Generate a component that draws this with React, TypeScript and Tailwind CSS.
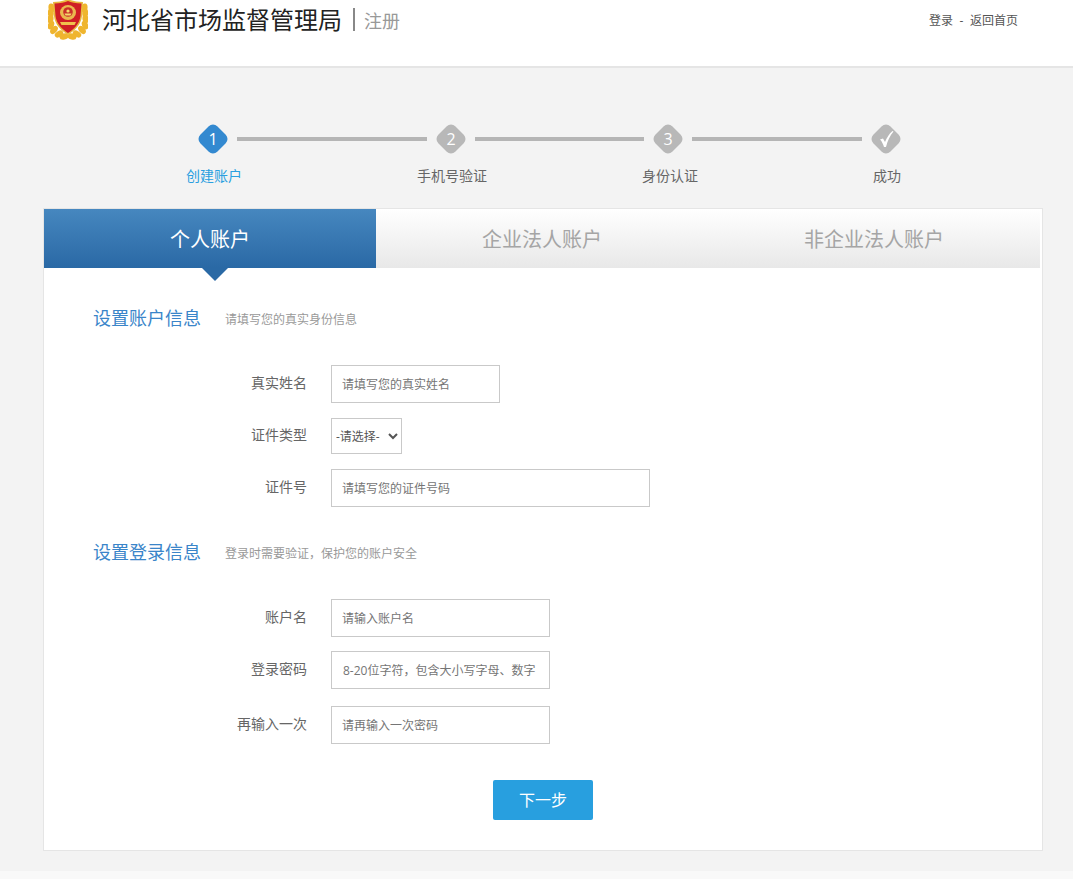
import React from 'react';

const fontCls = "font-['Open_Sans','Noto_Sans_CJK_SC',sans-serif]";

const leaves = [
  [3.5, 8, -8],
  [2.8, 13, -2],
  [2.5, 19, 6],
  [3, 25, 20],
  [6, 30, 42],
  [11, 34, 60],
  [16, 36.5, 78],
];

const Emblem = () => (
  <svg viewBox="0 0 40 40" className="w-[40px] h-[40px] shrink-0">
    {leaves.map(([x, y, r]) => (
      <g key={`${x}-${y}`}>
        <ellipse cx={x} cy={y} rx="3" ry="4.6" fill="#efb52e" transform={`rotate(${r} ${x} ${y})`} />
        <ellipse cx={40 - x} cy={y} rx="3" ry="4.6" fill="#efb52e" transform={`rotate(${-r} ${40 - x} ${y})`} />
      </g>
    ))}
    <path d="M5 2 C11 2 16 1 20 -1 C24 1 29 2 35 2 L34 16 C33 25 27 30 20 35 C13 30 7 25 6 16 Z" fill="#e9b83f" />
    <path d="M6.5 3.5 C12 3.5 17 2.5 20 1 C23 2.5 28 3.5 33.5 3.5 L32.5 16 C31.5 24 26 29 20 33 C14 29 8.5 24 7.5 16 Z" fill="#cf1f25" />
    <ellipse cx="20" cy="12.5" rx="8" ry="7.5" fill="#eab94e" />
    <circle cx="20" cy="12" r="4.8" fill="#c9302a" />
    <path d="M16.5 13.5 L23.5 13.5 L22.5 15.5 L17.5 15.5 Z" fill="#f6d76b" />
    <circle cx="20" cy="11" r="1.6" fill="#f6d76b" />
    <path d="M12 22 L28 22 L26.5 25 L13.5 25 Z" fill="#f0c14d" />
  </svg>
);

const Diamond = ({ active, children }: { active?: boolean; children: React.ReactNode }) => (
  <div className="grid place-items-center w-[30px] h-[30px] shrink-0">
    <div className={`[grid-area:1/1] w-[24px] h-[24px] rotate-45 rounded-[6px] ${active ? 'bg-[#3389d0]' : 'bg-[#b8b8b8]'}`} />
    <span className="[grid-area:1/1] relative text-white text-[16px] leading-none">{children}</span>
  </div>
);

const Line = ({ w }: { w: string }) => <div className={`h-[4px] bg-[#b5b5b5] mx-[9px] ${w}`} />;

const Field = ({ label, className, children }: { label: string; className?: string; children: React.ReactNode }) => (
  <div className={`flex items-center ${className ?? ''}`}>
    <label className="w-[213px] text-right text-[14px] text-[#666] mr-[24px] -mt-[4px]">{label}</label>
    {children}
  </div>
);

const inputCls =
  'h-[38px] border border-[#c9c9c9] bg-white pl-[10px] pr-[6px] text-[12px] outline-none placeholder:text-[#757575]';

const Section = ({ title, tip, className }: { title: string; tip: string; className: string }) => (
  <div className={`flex items-center h-[24px] ${className}`}>
    <h2 className="w-[131px] -ml-[1px] mr-[1px] text-[18px] font-normal text-[#3a85c9]">{title}</h2>
    <span className="text-[12px] text-[#999] mt-[3px]">{tip}</span>
  </div>
);

export default function App() {
  return (
    <div className={`min-h-screen bg-[#f3f3f3] flex flex-col ${fontCls}`}>
      <header className="h-[68px] bg-white border-b-2 border-[#e5e5e5] flex items-start pl-[48px] pr-[55px]">
        <Emblem />
        <h1 className="ml-[14px] text-[24px] font-normal leading-[40px] text-[#222]">河北省市场监督管理局</h1>
        <div className="ml-[11px] mt-[8px] w-[2px] h-[23px] bg-[#888]" />
        <span className="ml-[9px] text-[18px] leading-[42px] text-[#999]">注册</span>
        <div className="ml-auto flex text-[12px] leading-[42px] text-[#555]">
          <span>登录</span>
          <span className="w-[17px] text-center">-</span>
          <span>返回首页</span>
        </div>
      </header>

      <div className="flex items-center pl-[198px] mt-[56px] h-[30px]">
        <Diamond active>1</Diamond>
        <Line w="w-[190px]" />
        <Diamond>2</Diamond>
        <Line w="w-[169px]" />
        <Diamond>3</Diamond>
        <Line w="w-[170px]" />
        <Diamond>
          <svg viewBox="0 0 16 18" className="w-[16px] h-[20px]">
            <path d="M2 9.5 L5 8.5 L7 12 C9 7.5 11 4 14.5 1 L15.5 1.5 C12 5.5 9.5 11 8 17 L6 17 C5 14 4 11.5 2 9.5 Z" fill="#fff" />
          </svg>
        </Diamond>
      </div>
      <div className="flex pl-[154px] mt-[11px] text-[14px] leading-[22px] text-[#666] text-center">
        <span className="w-[120px] text-[#2a9fe0]">创建账户</span>
        <span className="w-[120px] ml-[118px]">手机号验证</span>
        <span className="w-[120px] ml-[98px]">身份认证</span>
        <span className="w-[120px] ml-[97px]">成功</span>
      </div>

      <main className="ml-[43px] mt-[21px] w-[1000px] h-[643px] border border-[#e5e5e5] bg-white">
        <div className="flex w-[996px] h-[59px] text-[20px]">
          <div className="relative w-[332px] pt-[3px] flex items-center justify-center text-white bg-gradient-to-b from-[#4687bf] to-[#2a69a5]">
            个人账户
            <div className="absolute left-[158px] top-full w-0 h-0 border-x-[13px] border-x-transparent border-t-[13px] border-t-[#2a69a5]" />
          </div>
          <div className="w-[332px] pt-[3px] flex items-center justify-center text-[#a5a5a5] bg-gradient-to-b from-white to-[#e8e8e8]">企业法人账户</div>
          <div className="w-[332px] pt-[3px] flex items-center justify-center text-[#a5a5a5] bg-gradient-to-b from-white to-[#e8e8e8]">非企业法人账户</div>
        </div>

        <div className="pl-[50px] flex flex-col">
          <Section title="设置账户信息" tip="请填写您的真实身份信息" className="mt-[38px]" />
          <Field label="真实姓名" className="mt-[35px]">
            <input className={`${inputCls} w-[169px]`} placeholder="请填写您的真实姓名" />
          </Field>
          <Field label="证件类型" className="mt-[15px]">
            <select className="w-[71px] h-[36px] border border-[#c9c9c9] bg-white text-[12px] text-[#555] outline-none">
              <option>-请选择-</option>
            </select>
          </Field>
          <Field label="证件号" className="mt-[15px]">
            <input className={`${inputCls} w-[319px]`} placeholder="请填写您的证件号码" />
          </Field>

          <Section title="设置登录信息" tip="登录时需要验证，保护您的账户安全" className="mt-[33px]" />
          <Field label="账户名" className="mt-[35px]">
            <input className={`${inputCls} w-[219px]`} placeholder="请输入账户名" />
          </Field>
          <Field label="登录密码" className="mt-[14px]">
            <input className={`${inputCls} w-[219px] pl-[11px]`} placeholder="8-20位字符，包含大小写字母、数字" />
          </Field>
          <Field label="再输入一次" className="mt-[17px]">
            <input className={`${inputCls} w-[219px]`} placeholder="请再输入一次密码" />
          </Field>
          <button className="mt-[36px] ml-[399px] w-[100px] h-[40px] rounded-[2px] bg-[#289fdf] text-white text-[16px]">下一步</button>
        </div>
      </main>

      <div className="mt-[20px] flex-1 bg-[#f9f9f9]" />
    </div>
  );
}
